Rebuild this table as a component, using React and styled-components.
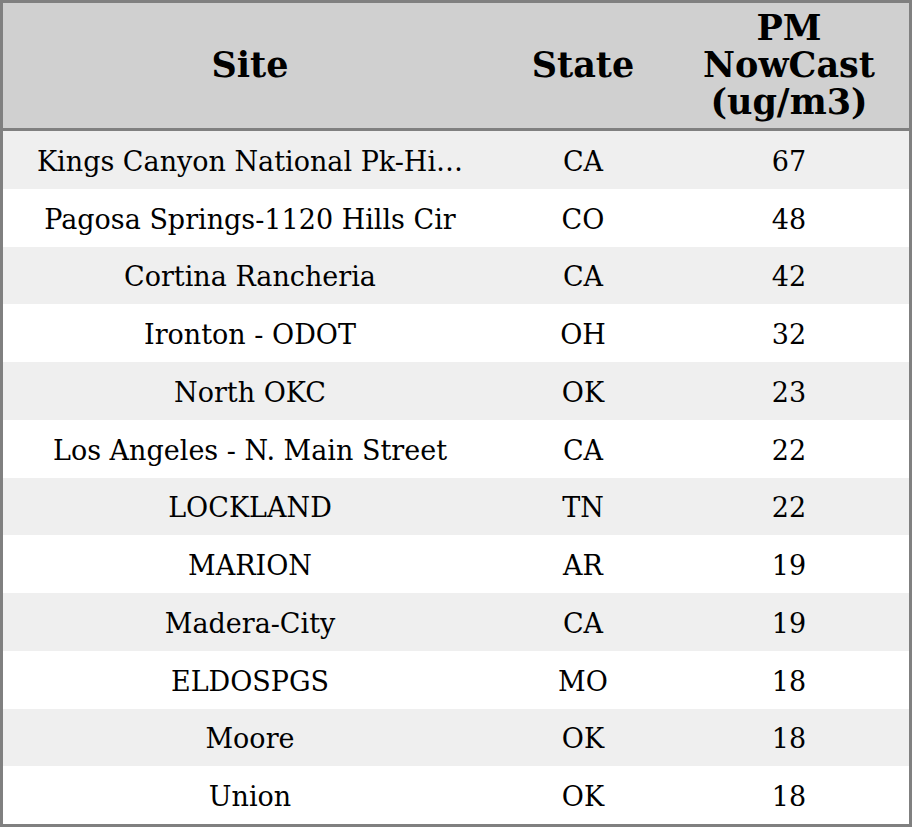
import React from 'react'
import styled, { createGlobalStyle } from 'styled-components'

const rows = [
  ['Kings Canyon National Pk-Hi…', 'CA', 67],
  ['Pagosa Springs-1120 Hills Cir', 'CO', 48],
  ['Cortina Rancheria', 'CA', 42],
  ['Ironton - ODOT', 'OH', 32],
  ['North OKC', 'OK', 23],
  ['Los Angeles - N. Main Street', 'CA', 22],
  ['LOCKLAND', 'TN', 22],
  ['MARION', 'AR', 19],
  ['Madera-City', 'CA', 19],
  ['ELDOSPGS', 'MO', 18],
  ['Moore', 'OK', 18],
  ['Union', 'OK', 18],
]

const App = () => {
  return (
    <>
      <Global />
      <Table>
        <Head>
          <HeadCell>Site</HeadCell>
          <HeadCell>State</HeadCell>
          <HeadCell>PM<br />NowCast<br />(ug/m3)</HeadCell>
        </Head>
        <Body>
          {rows.map(([site, state, value], i) => (
            <Row key={site} $shaded={i % 2 === 0}>
              <Cell>{site}</Cell>
              <Cell>{state}</Cell>
              <Cell>{value}</Cell>
            </Row>
          ))}
        </Body>
      </Table>
    </>
  )
}

export default App

const Global = createGlobalStyle`
  html, body {
    margin: 0;
    padding: 0;
    background: #ffffff;
  }
  * {
    box-sizing: border-box;
  }
`
const Table = styled.div`
  width: 912px;
  height: 827px;
  border: 3px solid #808080;
  display: flex;
  flex-direction: column;
  font-family: "DejaVu Serif", serif;
  color: #000;
`
const Head = styled.div`
  display: grid;
  grid-template-columns: 494px 172px 240px;
  height: 128px;
  background-color: #d0d0d0;
  border-bottom: 3px solid #808080;
`
const HeadCell = styled.div`
  display: flex;
  align-items: center;
  justify-content: center;
  text-align: center;
  font-size: 35px;
  font-weight: bold;
  line-height: 37px;
  padding-bottom: 2px;
`
const Body = styled.div`
  flex: 1;
  display: grid;
  grid-template-rows: repeat(12, 1fr);
`
const Row = styled.div`
  display: grid;
  grid-template-columns: 494px 172px 240px;
  background-color: ${p => (p.$shaded ? '#efefef' : '#ffffff')};
`
const Cell = styled.div`
  display: flex;
  align-items: center;
  justify-content: center;
  font-size: 27px;
  white-space: nowrap;
  padding-top: 3px;
`
